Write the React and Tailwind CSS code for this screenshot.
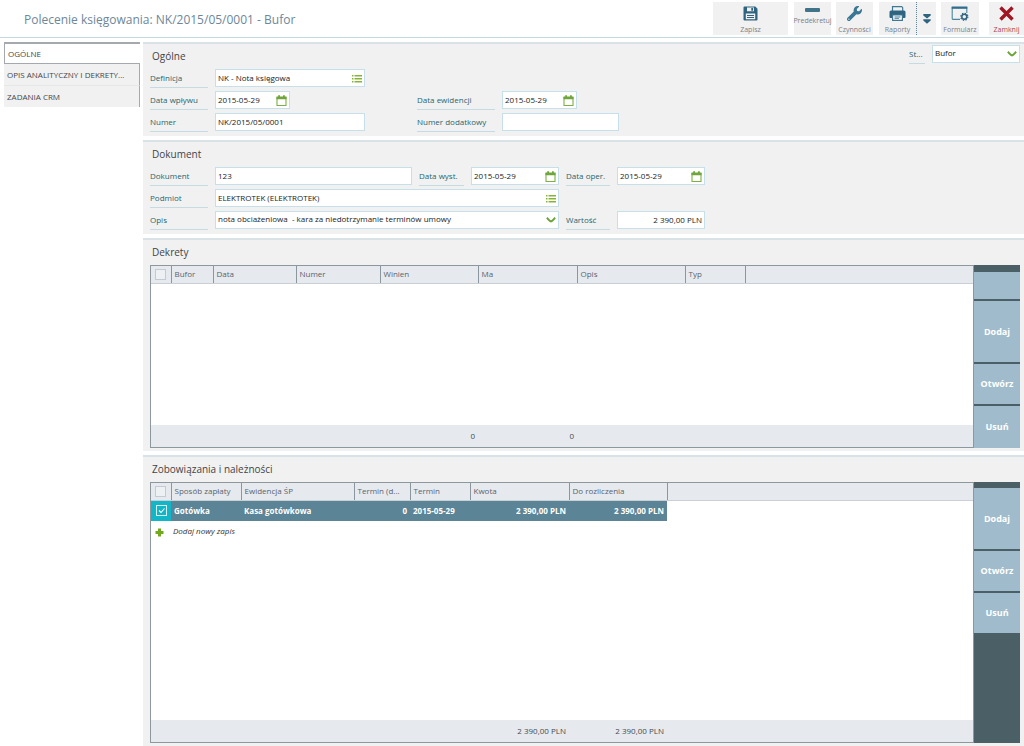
import React from "react";
import { FaWrench } from "react-icons/fa";

const inputClass =
  "h-full w-full min-w-0 bg-transparent px-[2px] pb-[2px] text-[8px] text-[#222] outline-none";

function CalendarIcon() {
  return (
    <svg className="h-[11px] w-[11px] shrink-0" viewBox="0 0 11 11" aria-hidden="true">
      <path d="M1 2.5h9v8H1z" fill="none" stroke="#7db043" strokeWidth="1.1" />
      <path d="M.5 1.500h10v2.700H.5zM2.200 .3h1.800v2H2.200zM7 .3h1.800v2H7z" fill="#6fa53a" />
    </svg>
  );
}

function ListIcon() {
  return (
    <svg className="h-[9px] w-[10px] shrink-0" viewBox="0 0 10 9" aria-hidden="true">
      <path
        d="M0 1h1.5v1.4H0zM2.5 1H10v1.4H2.5zM0 4h1.5v1.4H0zM2.5 4H10v1.4H2.5zM0 7h1.5v1.4H0zM2.5 7H10v1.4H2.5z"
        fill="#86b536"
      />
    </svg>
  );
}

function ChevronIcon() {
  return (
    <svg className="h-[8px] w-[10px]" viewBox="0 0 10 8" fill="none" aria-hidden="true">
      <path d="M.8 1.800C2.400 3.200 3.600 5.400 5 5.400S7.600 3.200 9.200 1.800" stroke="#6da43a" strokeWidth="2.100" />
    </svg>
  );
}

function SaveIcon() {
  return (
    <svg className="h-[15px] w-[15px]" viewBox="0 0 15 15" aria-hidden="true">
      <path
        fill="#2f6480"
        fillRule="evenodd"
        d="M1.500 .5h10.800l2.200 2.200v10.800a1 1 0 0 1-1 1h-12a1 1 0 0 1-1-1v-12a1 1 0 0 1 1-1zM4 1.500v3.800h7V1.500zM2.800 7.500v5.800h9.400V7.500z"
      />
      <path d="M8.300 2h1.800v2.700H8.300zM4 8.900h7v1H4zM4 11h7v1H4z" fill="#2f6480" />
    </svg>
  );
}

function PrinterIcon() {
  return (
    <svg className="h-[15px] w-[17px]" viewBox="0 0 17 15" aria-hidden="true">
      <path d="M3.500 5V.7h9.200l1 1V5" fill="none" stroke="#3f7893" strokeWidth="1.200" />
      <path
        d="M2 4.500h13a1.500 1.500 0 0 1 1.500 1.500v5a1 1 0 0 1-1 1H14V9H3v3H1.500a1 1 0 0 1-1-1V6A1.500 1.500 0 0 1 2 4.500z"
        fill="#2f6480"
      />
      <path d="M3.600 9h9.800v5.300H3.600z" fill="#fff" stroke="#3f7893" strokeWidth="1.200" />
      <path d="M5.500 10.500h6v.9h-6zM5.500 12.200h4.500v.9H5.500z" fill="#3f7893" />
    </svg>
  );
}

function FormIcon() {
  return (
    <svg className="h-[15px] w-[18px]" viewBox="0 0 18 15" fill="none" aria-hidden="true">
      <path d="M9 13.400H2.200a1 1 0 0 1-1-1V1.500h14.600v5.500" stroke="#4a86a0" strokeWidth="1.100" />
      <path d="M.7 .5h15.600v2.300H.7z" fill="#2f6f8c" />
      <circle cx="13.300" cy="10.800" r="2.500" stroke="#2f6480" strokeWidth="1.500" />
      <circle cx="13.300" cy="10.800" r="3.600" stroke="#2f6480" strokeWidth="1.100" strokeDasharray="1.400 1.430" />
    </svg>
  );
}

function CloseIcon() {
  return (
    <svg className="h-[15px] w-[15px]" viewBox="0 0 15 15" fill="none" aria-hidden="true">
      <path d="M1.500 1.500l12 12M13.500 1.500l-12 12" stroke="#a01622" strokeWidth="3.400" />
    </svg>
  );
}

function ToolButton({ label, width, icon, tone = "text-[#78818c]", tight = false }) {
  return (
    <button
      type="button"
      className={`flex h-[33px] flex-col items-center bg-[#f1f1f1] pt-1 ${width} ${tone} ${tight ? "" : "justify-between"}`}
    >
      {icon}
      <span className="text-[7px] leading-[10px] whitespace-nowrap">{label}</span>
    </button>
  );
}

function Label({ htmlFor, className = "", children }) {
  return (
    <label
      htmlFor={htmlFor}
      className={`h-[19px] border-b border-[#c4dbe2] text-[8px] leading-[18px] whitespace-nowrap text-[#27666e] ${className}`}
    >
      {children}
    </label>
  );
}

function Field({ id, value, icon, className = "", align = "" }) {
  return (
    <div className={`flex h-[18px] items-center border border-[#c6e0e9] bg-white ${className}`}>
      <input id={id} defaultValue={value} className={`${inputClass} ${align}`} />
      {icon && <span className="mr-[2px] shrink-0">{icon}</span>}
    </div>
  );
}

function SelectField({ id, value, className = "" }) {
  return (
    <div className={`relative flex h-[18px] items-center border border-[#c6e0e9] bg-white ${className}`}>
      <select id={id} className={`${inputClass} appearance-none`}>
        <option>{value}</option>
      </select>
      <span className="pointer-events-none absolute right-[2px]">
        <ChevronIcon />
      </span>
    </div>
  );
}

function Section({ title, aside, className = "", children }) {
  return (
    <section className={`flex flex-col border-t-2 border-[#d9e3e7] bg-[#f1f1f1] pr-1 pl-[7px] ${className}`}>
      <div className="flex h-[25px] items-center justify-between pl-[2px]">
        <h2 className="text-[10px] text-[#3f4449]">{title}</h2>
        {aside}
      </div>
      {children}
    </section>
  );
}

function SideButton({ children, height }) {
  return (
    <button type="button" className={`w-full bg-[#a0bccc] text-[9px] font-bold text-white ${height}`}>
      {children}
    </button>
  );
}

function HeaderRow({ columns, selectAllLabel }) {
  return (
    <thead>
      <tr className="h-[17px] bg-[#e6eaef]">
        <th className="border-b border-[#c9cfd4] p-0">
          <input
            type="checkbox"
            aria-label={selectAllLabel}
            className="mx-auto block h-[11px] w-[11px] appearance-none border border-[#c3cad2] bg-[#eef1f4]"
          />
        </th>
        {columns.map((name, i) => (
          <th
            key={i}
            className="border-b border-l border-b-[#c9cfd4] border-l-[#8b979f] px-[3px] py-0 text-left font-normal whitespace-nowrap text-[#5a636c]"
          >
            {name}
          </th>
        ))}
      </tr>
    </thead>
  );
}

function Toolbar() {
  return (
    <header className="flex h-[38px] items-start justify-between border-b border-[#c3d8e1] pt-[2px]">
      <h1 className="pl-6 text-[12px] leading-[35px] text-[#6c879a]">
        Polecenie księgowania: NK/2015/05/0001 - Bufor
      </h1>
      <div className="flex">
        <ToolButton label="Zapisz" width="w-[75px] mr-[6px]" icon={<SaveIcon />} />
        <ToolButton
          label="Predekretuj"
          width="w-[37px] mr-[5px]"
          tight
          icon={
            <svg className="mt-[2px] mb-1 h-[4px] w-[15px]" viewBox="0 0 15 4" aria-hidden="true">
              <rect width="15" height="4" rx="1" fill="#3f7489" />
            </svg>
          }
        />
        <ToolButton
          label="Czynności"
          width="w-[37px] mr-[6px]"
          icon={<FaWrench className="h-[15px] w-[15px] text-[#3a7795]" />}
        />
        <ToolButton label="Raporty" width="w-[37px]" icon={<PrinterIcon />} />
        <button
          type="button"
          aria-label="Więcej"
          className="mr-[5px] flex h-[33px] w-[20px] items-center justify-center border-l border-dotted border-[#5a84a0] bg-[#f1f1f1]"
        >
          <svg className="h-[10px] w-[8px]" viewBox="0 0 8 10" fill="#2f6480" aria-hidden="true">
            <path d="M.3 0h7.400v1.400L4 4.600.3 1.400zM.3 5.200h7.400v1.400L4 9.800.3 6.600z" />
          </svg>
        </button>
        <ToolButton label="Formularz" width="w-[38px] mr-[10px]" icon={<FormIcon />} />
        <ToolButton label="Zamknij" width="w-[35px]" tone="text-[#b04450]" icon={<CloseIcon />} />
      </div>
    </header>
  );
}

function Sidebar() {
  return (
    <nav className="flex w-[136px] shrink-0 flex-col self-start text-[8px] text-[#45474a]">
      <a
        href="#ogolne"
        className="h-[22px] border-t-2 border-b border-l border-[#a4a9b0] bg-white pl-[3px] leading-[19px]"
      >
        OGÓLNE
      </a>
      <a
        href="#opis"
        className="h-[22px] border-r border-b border-r-[#a4a9b0] border-b-[#e7e7e7] bg-[#f1f1f1] pl-[3px] leading-[21px]"
      >
        OPIS ANALITYCZNY I DEKRETY...
      </a>
      <a
        href="#zadania"
        className="h-[21px] border-r border-[#a4a9b0] bg-[#f1f1f1] pl-[3px] leading-[21px]"
      >
        ZADANIA CRM
      </a>
    </nav>
  );
}

function EntriesTable() {
  return (
    <table className="h-full w-full table-fixed border-collapse text-[8px] leading-[12px]">
      <colgroup>
        <col className="w-[20px]" />
        <col className="w-[42px]" />
        <col className="w-[83px]" />
        <col className="w-[84px]" />
        <col className="w-[98px]" />
        <col className="w-[99px]" />
        <col className="w-[108px]" />
        <col className="w-[60px]" />
        <col />
      </colgroup>
      <HeaderRow
        selectAllLabel="Zaznacz wszystkie dekrety"
        columns={["Bufor", "Data", "Numer", "Winien", "Ma", "Opis", "Typ", ""]}
      />
      <tbody>
        <tr>
          <td colSpan={9} />
        </tr>
      </tbody>
      <tfoot>
        <tr className="h-[22px] bg-[#e6eaef] text-right text-[#454b52]">
          <td colSpan={4} />
          <td className="px-[3px] py-0">0</td>
          <td className="px-[3px] py-0">0</td>
          <td colSpan={3} />
        </tr>
      </tfoot>
    </table>
  );
}

function PaymentsTable() {
  return (
    <table className="h-full w-full table-fixed border-collapse text-[8px] leading-[12px]">
      <colgroup>
        <col className="w-[20px]" />
        <col className="w-[70px]" />
        <col className="w-[113px]" />
        <col className="w-[56px]" />
        <col className="w-[60px]" />
        <col className="w-[99px]" />
        <col className="w-[98px]" />
        <col />
      </colgroup>
      <HeaderRow
        selectAllLabel="Zaznacz wszystkie płatności"
        columns={["Sposób zapłaty", "Ewidencja ŚP", "Termin (d...", "Termin", "Kwota", "Do rozliczenia", ""]}
      />
      <tbody>
        <tr className="h-[21px] font-bold whitespace-nowrap text-white">
          <td className="bg-[#13b6c6] p-0">
            <span className="relative mx-auto block h-[11px] w-[11px]">
              <input
                type="checkbox"
                defaultChecked
                aria-label="Gotówka"
                className="block h-[11px] w-[11px] appearance-none border border-[#d5f2f5]"
              />
              <svg
                className="pointer-events-none absolute inset-0"
                viewBox="0 0 11 11"
                fill="none"
                aria-hidden="true"
              >
                <path d="M3 5.500l2 2 3.500-4" stroke="#fff" strokeWidth="1.100" />
              </svg>
            </span>
          </td>
          <td className="bg-[#5b8496] px-[3px] py-0">Gotówka</td>
          <td className="bg-[#5b8496] px-[3px] py-0">Kasa gotówkowa</td>
          <td className="bg-[#5b8496] px-[3px] py-0 text-right">0</td>
          <td className="bg-[#5b8496] px-[3px] py-0">2015-05-29</td>
          <td className="bg-[#5b8496] px-[3px] py-0 text-right">2 390,00 PLN</td>
          <td className="bg-[#5b8496] px-[3px] py-0 text-right">2 390,00 PLN</td>
          <td />
        </tr>
        <tr>
          <td colSpan={8} className="p-0 align-top">
            <button type="button" className="flex h-[20px] items-center gap-[9px] pl-1 text-[#333] italic">
              <svg className="mt-[3px] h-[9px] w-[9px]" viewBox="0 0 9 9" aria-hidden="true">
                <path d="M3 .5h3V3h2.500v3H6v2.500H3V6H.5V3H3z" fill="#72a81e" />
              </svg>
              Dodaj nowy zapis
            </button>
          </td>
        </tr>
      </tbody>
      <tfoot>
        <tr className="h-[22px] bg-[#e6eaef] text-right whitespace-nowrap text-[#454b52]">
          <td colSpan={5} />
          <td className="px-[3px] py-0">2 390,00 PLN</td>
          <td className="px-[3px] py-0">2 390,00 PLN</td>
          <td />
        </tr>
      </tfoot>
    </table>
  );
}

export default function App() {
  return (
    <div className="flex min-h-screen flex-col bg-white font-['Open_Sans','Noto_Sans',sans-serif]">
      <Toolbar />
      <div className="flex flex-1 gap-[3px] pt-1 pl-1">
        <Sidebar />
        <main className="flex min-w-0 flex-1 flex-col gap-1">
          <Section
            title="Ogólne"
            className="pb-1"
            aside={
              <div className="flex gap-[7px] self-start pt-px">
                <Label htmlFor="stan" className="w-4">
                  St...
                </Label>
                <SelectField id="stan" value="Bufor" className="w-[88px]" />
              </div>
            }
          >
            <div className="flex gap-[52px]">
              <div className="grid grid-cols-[58px_150px] gap-x-[7px] gap-y-[3px]">
                <Label htmlFor="definicja">Definicja</Label>
                <Field id="definicja" value="NK - Nota księgowa" icon={<ListIcon />} />
                <Label htmlFor="wplyw">Data wpływu</Label>
                <Field id="wplyw" value="2015-05-29" icon={<CalendarIcon />} className="w-[75px]" />
                <Label htmlFor="numer">Numer</Label>
                <Field id="numer" value="NK/2015/05/0001" />
              </div>
              <div className="grid grid-cols-[78px_117px] content-end gap-x-[7px] gap-y-[3px]">
                <Label htmlFor="ewidencja">Data ewidencji</Label>
                <Field id="ewidencja" value="2015-05-29" icon={<CalendarIcon />} className="w-[75px]" />
                <Label htmlFor="dodatkowy">Numer dodatkowy</Label>
                <Field id="dodatkowy" value="" />
              </div>
            </div>
          </Section>

          <Section title="Dokument" className="pb-1">
            <div className="grid grid-cols-[58px_197px_45px_88px_44px_88px] gap-x-[7px] gap-y-[3px]">
              <Label htmlFor="dokument">Dokument</Label>
              <Field id="dokument" value="123" />
              <Label htmlFor="wyst">Data wyst.</Label>
              <Field id="wyst" value="2015-05-29" icon={<CalendarIcon />} />
              <Label htmlFor="oper">Data oper.</Label>
              <Field id="oper" value="2015-05-29" icon={<CalendarIcon />} />
              <Label htmlFor="podmiot">Podmiot</Label>
              <Field
                id="podmiot"
                value="ELEKTROTEK (ELEKTROTEK)"
                icon={<ListIcon />}
                className="col-span-3"
              />
              <span className="col-span-2" />
              <Label htmlFor="opis-pole">Opis</Label>
              <SelectField
                id="opis-pole"
                value={"nota obciażeniowa\u00a0 - kara za niedotrzymanie terminów umowy"}
                className="col-span-3"
              />
              <Label htmlFor="wartosc">Wartość</Label>
              <Field id="wartosc" value="2 390,00 PLN" align="text-right" />
            </div>
          </Section>

          <Section title="Dekrety" className="pb-[3px]">
            <div className="flex">
              <div className="h-[183px] min-w-0 flex-1 border border-[#8d989e] bg-white">
                <EntriesTable />
              </div>
              <div className="flex w-[46px] flex-col gap-[2px] bg-[#4b6066] pt-[7px]">
                <div className="h-[27px] bg-[#a0bccc]" />
                <SideButton height="h-[61px]">Dodaj</SideButton>
                <SideButton height="h-[40px]">Otwórz</SideButton>
                <SideButton height="flex-1">Usuń</SideButton>
              </div>
            </div>
          </Section>

          <Section title="Zobowiązania i należności" className="flex-1 pb-[3px]">
            <div className="flex flex-1">
              <div className="flex min-w-0 flex-1 border border-[#8d989e] bg-white">
                <PaymentsTable />
              </div>
              <div className="flex w-[46px] flex-col gap-[2px] bg-[#4b6066] pt-[6px]">
                <SideButton height="h-[61px]">Dodaj</SideButton>
                <SideButton height="h-[40px]">Otwórz</SideButton>
                <SideButton height="h-[40px]">Usuń</SideButton>
              </div>
            </div>
          </Section>
        </main>
      </div>
    </div>
  );
}
